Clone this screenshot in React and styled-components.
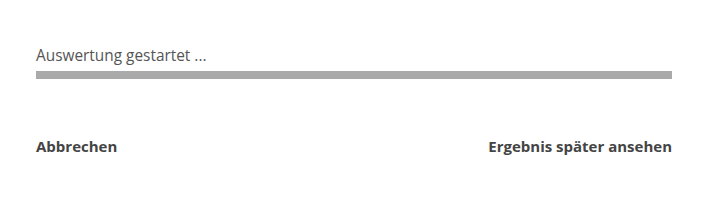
import styled, { createGlobalStyle } from 'styled-components';

const GlobalStyle = createGlobalStyle`
  body {
    margin: 0;
    background: #ffffff;
    font-family: "Open Sans", "Liberation Sans", sans-serif;
  }
`;

const Dialog = styled.div`
  display: flex;
  flex-direction: column;
  width: 703px;
  height: 211px;
  box-sizing: border-box;
  padding: 46px 31px 0 36px;
`;

const Status = styled.div`
  display: flex;
  flex-direction: column;
  gap: 5px;
`;

const Label = styled.span`
  font-size: 15.4px;
  line-height: 20px;
  color: #555555;
`;

const Track = styled.div`
  height: 8px;
  background: #dddddd;
`;

const Fill = styled.div`
  height: 100%;
  background: #aaaaaa;
`;

const Actions = styled.div`
  display: flex;
  justify-content: space-between;
  margin-top: 57px;
`;

const TextButton = styled.button`
  border: 0;
  padding: 0;
  background: none;
  font-family: inherit;
  font-size: 15px;
  font-weight: 700;
  line-height: 20px;
  color: #444444;
  cursor: pointer;
`;

const App = () => {
  const progress = 100;
  return (
    <>
      <GlobalStyle />
      <Dialog>
        <Status>
          <Label>Auswertung gestartet ...</Label>
          <Track>
            <Fill style={{ width: `${progress}%` }} />
          </Track>
        </Status>
        <Actions>
          <TextButton>Abbrechen</TextButton>
          <TextButton>Ergebnis später ansehen</TextButton>
        </Actions>
      </Dialog>
    </>
  );
};

export default App;
